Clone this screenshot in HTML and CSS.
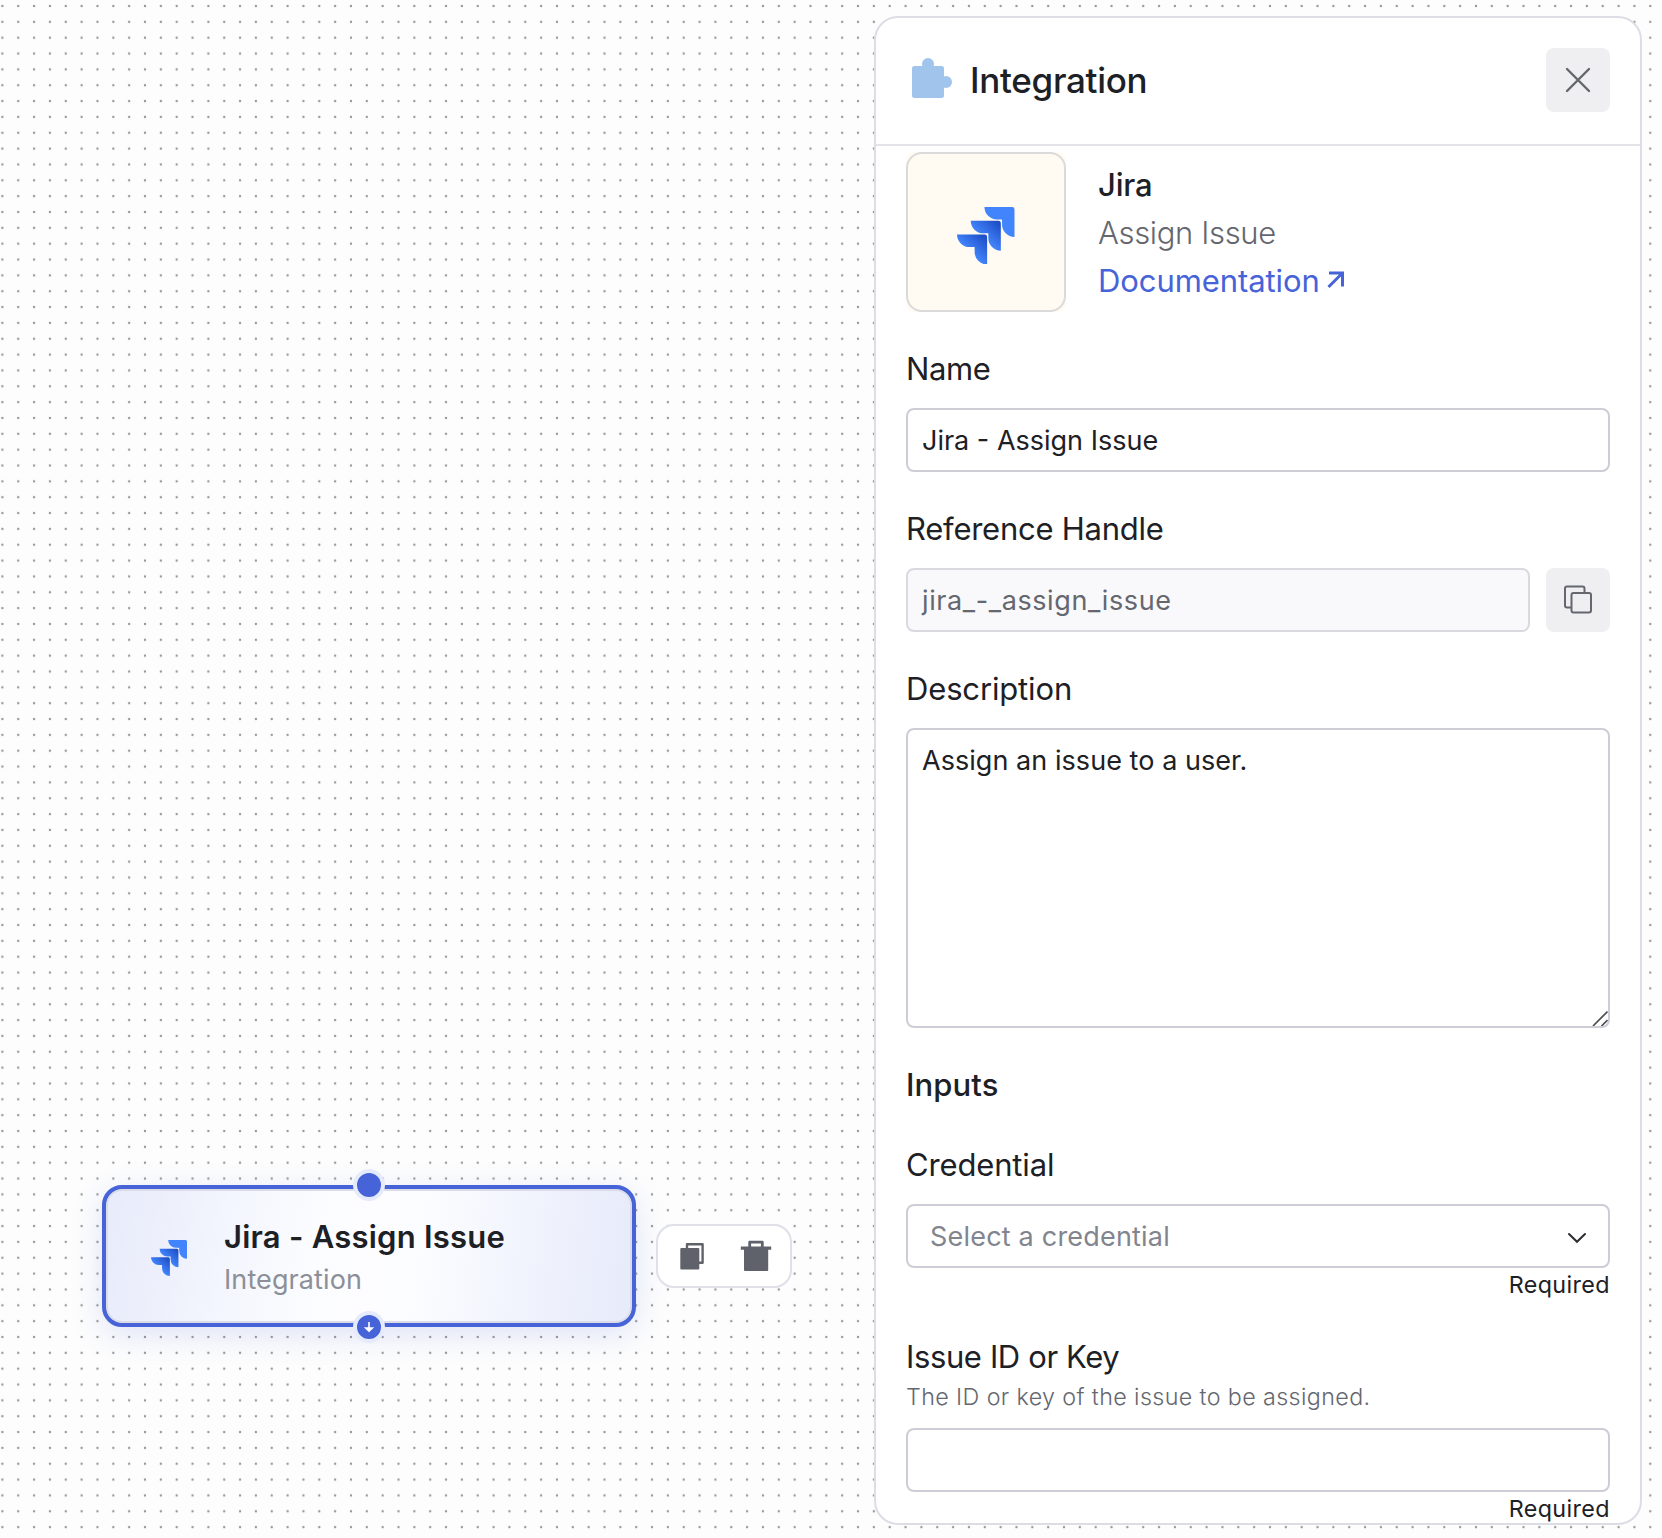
FILE: index.html
```html
<!DOCTYPE html>
<html lang="en">
<head>
<meta charset="utf-8">
<title>Workflow editor</title>
<link rel="stylesheet" href="styles.css">
</head>
<body>
<main class="canvas">
  <svg class="grid" aria-hidden="true">
    <defs>
      <pattern id="dots" x="-5.52" y="-1.92" width="15.845" height="15.845" patternUnits="userSpaceOnUse">
        <circle cx="7.92" cy="7.92" r="1.200" fill="#98989b"/>
      </pattern>
    </defs>
    <rect width="100%" height="100%" fill="url(#dots)"/>
  </svg>

  <section class="node">
    <span class="handle handle-top"></span>
    <svg class="node-logo" viewBox="0 0 24 24"><use href="#jira"/></svg>
    <div class="node-text">
      <div class="node-title">Jira - Assign Issue</div>
      <div class="node-sub">Integration</div>
    </div>
    <span class="handle handle-bottom">
      <svg viewBox="0 0 24 24"><path d="M11.200 7h1.600v5.200h4.400L12 17.200 6.800 12.200h4.400z" fill="#fff"/></svg>
    </span>
  </section>

  <div class="node-tools">
    <svg viewBox="0 0 32 32"><path d="M11 10V4.200h15.600v18.600H22" fill="none" stroke="#5f626a" stroke-width="2.400" stroke-linejoin="round"/><rect x="4.300" y="8" width="19" height="21.500" rx="1" fill="#5f626a"/></svg>
    <svg class="trash" viewBox="0 0 32 32"><path d="M9.700 8V3.200h12.600V8" fill="none" stroke="#5f626a" stroke-width="2.800" stroke-linejoin="round"/><path d="M.8 7.500h30.400v3.300H28.200V31q0 1-1 1H5q-1 0-1-1V10.800H.8z" fill="#5f626a"/></svg>
  </div>

  <aside class="panel">
    <header class="panel-head">
      <svg class="puzzle" viewBox="0 0 40 40"><rect y="8" width="32" height="32" rx="2.500"/><circle cx="16" cy="6" r="6"/><circle cx="34" cy="24" r="6"/></svg>
      <h1>Integration</h1>
      <button class="icon-btn" aria-label="Close"><svg viewBox="0 0 32 32"><path d="M5 5l22 22M27 5L5 27"/></svg></button>
    </header>
    <div class="panel-body">
      <div class="app">
        <div class="app-tile"><div class="app-logo"><svg viewBox="0 0 24 24"><use href="#jira"/></svg></div></div>
        <div class="app-text">
          <div class="app-name">Jira</div>
          <div class="app-action">Assign Issue</div>
          <a class="app-link">Documentation<svg viewBox="0 0 18 18"><path d="M2 2h13.500v13.500M15.500 2L1.500 16"/></svg></a>
        </div>
      </div>

      <div class="field">
        <label class="l-name">Name</label>
        <div class="box">Jira - Assign Issue</div>
      </div>
      <div class="field">
        <label class="l-ref">Reference Handle</label>
        <div class="row">
          <div class="box disabled">jira_-_assign_issue</div>
          <button class="icon-btn" aria-label="Copy"><svg viewBox="0 0 32 32"><g class="copy"><path d="M8.500 23.500H5q-2 0-2-2V4.500q0-2 2-2H20.500q2 0 2 2v4"/><rect x="9.500" y="9" width="19.500" height="19.500" rx="2"/></g></svg></button>
        </div>
      </div>
      <div class="field">
        <label class="l-desc">Description</label>
        <div class="box area">Assign an issue to a user.<svg class="grip" viewBox="0 0 16 16"><path d="M1 16L15.500 1.500M9.500 16l6-6"/></svg></div>
      </div>
      <h2>Inputs</h2>
      <div class="field">
        <label class="l-cred">Credential</label>
        <div class="box select">Select a credential<svg viewBox="0 0 20 12"><path d="M2 2l8 7.800L18 2"/></svg></div>
        <div class="required">Required</div>
      </div>
      <div class="field">
        <label class="l-issue">Issue ID or Key</label>
        <div class="hint">The ID or key of the issue to be assigned.</div>
        <div class="box"></div>
        <div class="required">Required</div>
      </div>
    </div>
  </aside>
</main>

<svg class="defs" aria-hidden="true">
  <defs>
    <linearGradient id="g1" x1="0.98" y1="0.05" x2="0.45" y2="0.6"><stop offset="0.1" stop-color="#1f50c8"/><stop offset="1" stop-color="#4284fb"/></linearGradient>
    <g id="jira">
      <path fill="#4284fb" d="M23.013 0H11.455a5.215 5.215 0 0 0 5.215 5.215h2.129v2.057A5.215 5.215 0 0 0 24 12.483V1.005A1.001 1.001 0 0 0 23.013 0Z"/>
      <path fill="url(#g1)" d="M17.294 5.757H5.736a5.215 5.215 0 0 0 5.215 5.214h2.129v2.058a5.218 5.218 0 0 0 5.215 5.214V6.758a1.001 1.001 0 0 0-1.001-1.001z"/>
      <path fill="url(#g1)" d="M11.571 11.513H0a5.218 5.218 0 0 0 5.232 5.215h2.130v2.057A5.215 5.215 0 0 0 12.575 24V12.518a1.005 1.005 0 0 0-1.005-1.005z"/>
    </g>
  </defs>
</svg>
</body>
</html>
```
FILE: styles.css
```css
* { box-sizing: border-box; }
body { margin: 0; font-family: Inter, "Liberation Sans", sans-serif; color: #1d2025; }
.canvas { position: relative; width: 1662px; height: 1538px; overflow: hidden; background: #fdfdfd; }
.grid { position: absolute; inset: 0; width: 100%; height: 100%; }
.defs { position: absolute; width: 0; height: 0; }

.node {
  position: absolute; left: 102px; top: 1185px; width: 534px; height: 142px;
  display: flex; align-items: center;
  padding-left: 45px;
  border: 4px solid #4763d8; border-radius: 20px;
  background: linear-gradient(98deg, #e9ecfa 3%, #f3f6fd 24%, #fbfcff 40%, #fdfdff 50%, #fbfcff 60%, #f2f5fd 76%, #e8ebfa 97%) padding-box, #4763d8;
  box-shadow: inset 0 0 0 2px #dadde8, 0 8px 32px rgba(71, 99, 216, 0.16);
}
.node-logo { width: 36px; height: 36px; margin-top: 4px; }
.node-text { margin-left: 37px; padding-top: 3px; }
.node-title { font-size: 31px; font-weight: 600; line-height: 44px; letter-spacing: 0.24px; white-space: nowrap; }
.node-sub { font-size: 27px; line-height: 41px; letter-spacing: 0.1px; color: #8d8f98; }
.handle {
  position: absolute; left: 247px; width: 32px; height: 32px;
  border: 4px solid #e6ebfc; border-radius: 50%; background: #4763d8;
}
.handle svg { display: block; width: 24px; height: 24px; }
.handle-top { top: -20.5px; }
.handle-bottom { bottom: -20px; }

.node-tools {
  position: absolute; left: 656px; top: 1224px; width: 136px; height: 64px;
  display: flex; align-items: center; gap: 32px; padding-left: 18px;
  border: 2px solid #dfe0e8; border-radius: 18px; background: #fff;
}
.node-tools svg { width: 32px; height: 32px; }
.node-tools .trash { margin-top: -2px; }

.panel {
  position: absolute; left: 874px; top: 16px; width: 768px; height: 1509px;
  overflow: hidden;
  border: 2px solid #dddde5; border-radius: 24px; background: #fff;
}
.panel-head {
  display: flex; align-items: center; height: 128px; padding: 0 30px 2px 36px;
  border-bottom: 2px solid #e3e3ea;
}
.puzzle { width: 40px; height: 40px; fill: #a0c4ec; margin-top: -4px; }
h1 { flex: 1; margin: 0 0 0 18px; font-size: 35px; font-weight: 500; line-height: 48px; letter-spacing: -0.3px; }
.icon-btn {
  display: flex; align-items: center; justify-content: center;
  width: 64px; height: 64px; padding: 0; border: 0; border-radius: 8px; background: #efeff1;
}
.icon-btn svg { width: 32px; height: 32px; fill: none; stroke: #65676f; stroke-width: 2.4; stroke-linecap: round; }
.copy { stroke-width: 2; }

.panel-body { display: flex; flex-direction: column; gap: 32px; padding: 6px 30px 0; }
.app { display: flex; gap: 32px; }
.app-tile { width: 160px; height: 160px; border-radius: 8px; background: #fffaf2; }
.app-logo {
  display: flex; align-items: center; justify-content: center; height: 100%; padding-top: 7px;
  border: 2px solid #dadada; border-radius: 16px;
}
.app-logo svg { width: 57.5px; height: 57.5px; }
.app-text { padding-top: 9px; font-size: 31px; line-height: 48px; }
.app-name { font-weight: 500; letter-spacing: -0.15px; }
.app-action { color: #65676f; font-weight: 300; letter-spacing: -0.35px; }
.app-link { display: flex; align-items: center; gap: 7px; color: #4763d8; letter-spacing: -0.08px; }
.app-link svg { width: 18px; height: 18px; margin-top: -3px; fill: none; stroke: currentColor; stroke-width: 3; }

.field { display: flex; flex-direction: column; }
label, h2 { padding-top: 1px; font-size: 31px; line-height: 48px; font-weight: 400; }
h2 { margin: 0 0 -1px; font-weight: 500; letter-spacing: 0.1px; }
label { margin-bottom: 15px; letter-spacing: -0.15px; }
.l-name { letter-spacing: -0.4px; }
.l-ref { letter-spacing: -0.25px; }
.l-issue { margin-bottom: 0; letter-spacing: -0.38px; }
.box {
  height: 64px; padding: 0 14px;
  border: 2px solid #cdcdd6; border-radius: 8px; background: #fff;
  font-size: 27px; line-height: 62px;
}
.row { display: flex; gap: 16px; }
.row .box { flex: 1; }
.disabled { background: #f9f9fb; border-color: #d9d9e0; color: #65676f; letter-spacing: 0.6px; }
.area { position: relative; height: 300px; padding-top: 11px; line-height: 40px; letter-spacing: 0.05px; }
.grip { position: absolute; right: 0; bottom: 0; width: 16px; height: 16px; fill: none; stroke: #4c4e54; stroke-width: 1.7; }
.select { display: flex; align-items: center; justify-content: space-between; padding: 2px 21px 0 22px; line-height: 58px; color: #82848e; letter-spacing: 0.2px; }
.select svg { width: 20px; height: 12px; margin-top: 2px; fill: none; stroke: #2b2d33; stroke-width: 2; stroke-linecap: round; }
.required { margin-bottom: -1px; padding-top: 1px; font-size: 23.3px; line-height: 32px; text-align: right; letter-spacing: 0.4px; }
.hint { margin-bottom: 15px; font-size: 23.3px; line-height: 32px; font-weight: 300; letter-spacing: 0.375px; color: #65676f; }
```
